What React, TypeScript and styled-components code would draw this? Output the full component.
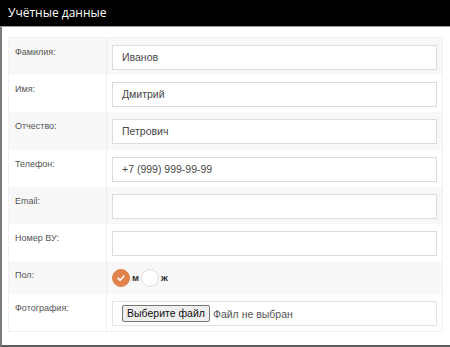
import styled, { createGlobalStyle } from "styled-components";

const GlobalStyle = createGlobalStyle`
  html, body {
    margin: 0;
    padding: 0;
    background: #fff;
    font-family: "Liberation Sans", Arial, sans-serif;
  }
`;

const fields = [
  { label: "Фамилия:", value: "Иванов" },
  { label: "Имя:", value: "Дмитрий" },
  { label: "Отчество:", value: "Петрович" },
  { label: "Телефон:", value: "+7 (999) 999-99-99" },
  { label: "Email:", value: "" },
  { label: "Номер ВУ:", value: "" },
];

export default function App() {
  return (
    <Panel>
      <GlobalStyle />
      <Header>Учётные данные</Header>
      <Body>
        <Table>
          {fields.map((f, i) => (
            <Row key={f.label} $striped={i % 2 === 0}>
              <Label>{f.label}</Label>
              <Cell>
                <Field>{f.value}</Field>
              </Cell>
            </Row>
          ))}
          <Row $striped>
            <Label>Пол:</Label>
            <RadioCell>
              <Radio $checked>
                <svg width="10" height="10" viewBox="0 0 10 10">
                  <path
                    d="M2 5.2 L4.2 7.3 L8 3"
                    fill="none"
                    stroke="#fff"
                    strokeWidth="1.6"
                    strokeLinecap="round"
                    strokeLinejoin="round"
                  />
                </svg>
              </Radio>
              <RadioText>м</RadioText>
              <Radio />
              <RadioText>ж</RadioText>
            </RadioCell>
          </Row>
          <Row>
            <Label>Фотография:</Label>
            <Cell>
              <FileField>
                <FileButton>Выберите файл</FileButton>
                <FileName>Файл не выбран</FileName>
              </FileField>
            </Cell>
          </Row>
        </Table>
      </Body>
    </Panel>
  );
}

const Panel = styled.div`
  width: 450px;
  height: 347px;
  display: flex;
  flex-direction: column;
  box-sizing: border-box;
  overflow: hidden;
`;

const Header = styled.div`
  height: 26px;
  background: #000;
  color: #fff;
  font-family: "Open Sans", "Noto Sans", sans-serif;
  font-size: 12px;
  line-height: 26px;
  padding-left: 8px;
  border-bottom: 1px solid #9a9a9a;
`;

const Body = styled.div`
  height: 318px;
  border-left: 2px solid #7b7b7b;
  border-bottom: 2px solid #5e5e5e;
  padding: 10px 7px 0 6px;
`;

const Table = styled.div`
  display: flex;
  flex-direction: column;
  border: 1px solid #f2f2f2;
`;

const Row = styled.div<{ $striped?: boolean }>`
  display: grid;
  grid-template-columns: 98px 1fr;
  background: ${(p) => (p.$striped ? "#f8f8f8" : "#fff")};
`;

const Label = styled.div`
  font-size: 9px;
  color: #555;
  padding: 9px 0 0 6px;
  border-right: 1px solid #eeeeee;
`;

const Cell = styled.div`
  padding: 7px 5px 5.2px 5px;
`;

const Field = styled.div`
  height: 25px;
  box-sizing: border-box;
  border: 1px solid #dcdbe3;
  background: #fff;
  padding: 0 9px;
  font-size: 10.5px;
  line-height: 23px;
  color: #484848;
`;

const RadioCell = styled.div`
  display: flex;
  align-items: center;
  height: 33px;
  padding-left: 5px;
`;

const Radio = styled.span<{ $checked?: boolean }>`
  width: 18px;
  height: 18px;
  border-radius: 50%;
  box-sizing: border-box;
  display: flex;
  align-items: center;
  justify-content: center;
  background: ${(p) => (p.$checked ? "#e0824a" : "#fff")};
  border: 1px solid ${(p) => (p.$checked ? "#e0824a" : "#dddddd")};
`;

const RadioText = styled.span`
  font-size: 9.5px;
  font-weight: bold;
  color: #333;
  margin: 0 2px 0 2px;
`;

const FileField = styled.div`
  height: 25px;
  box-sizing: border-box;
  border: 1px solid #e3e3e3;
  background: #fff;
  padding: 0 9px;
  display: flex;
  align-items: center;
  font-size: 10.5px;
`;

const FileButton = styled.span`
  background: #efefef;
  border: 1px solid #767676;
  border-radius: 2px;
  padding: 1px 4px;
  color: #111;
  font-size: 10.5px;
  line-height: 13px;
`;

const FileName = styled.span`
  color: #555;
  margin-left: 3px;
`;
